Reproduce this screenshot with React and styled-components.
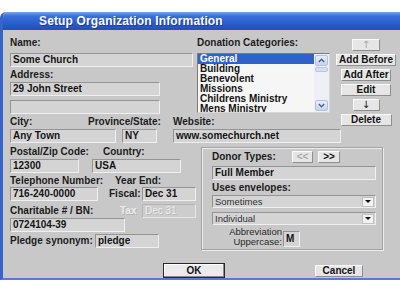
import React from "react";
import styled, { createGlobalStyle, css } from "styled-components";

const GlobalStyle = createGlobalStyle`
  html, body { margin: 0; padding: 0; background: #ffffff; }
  body { font-family: "Liberation Sans", Arial, sans-serif; }
  #root { width: 400px; height: 284px; overflow: hidden; }
  * { box-sizing: border-box; }
`;

const Page = styled.div`
  width: 400px;
  height: 284px;
  padding-top: 12px;
`;

const Window = styled.div`
  width: 400px;
  display: flex;
  flex-direction: column;
  border-left: 3px solid #3563c8;
  border-bottom: 2px solid #5a7cc8;
  border-top-left-radius: 6px;
  overflow: hidden;
`;

const TitleBar = styled.div`
  height: 18px;
  padding-left: 36px;
  background: linear-gradient(to bottom, #79a4ec 0%, #3b70da 22%, #2a5fcf 60%, #1f50bc 100%);
  color: #ffffff;
  font-weight: bold;
  font-size: 12px;
  line-height: 18px;
  letter-spacing: 0.15px;
  text-shadow: 1px 1px 0 #17398a;
  white-space: nowrap;
`;

const Body = styled.div`
  height: 248px;
  background: #c8c8c8;
  padding: 7px 0 0 7px;
  display: flex;
  flex-direction: column;
  overflow: hidden;
`;

const Row = styled.div`
  display: flex;
  align-items: ${(p) => p.$align || "flex-start"};
  margin-top: ${(p) => p.$mt || 0}px;
`;

const Column = styled.div`
  display: flex;
  flex-direction: column;
  width: ${(p) => (p.$w ? `${p.$w}px` : "auto")};
  margin-left: ${(p) => p.$ml || 0}px;
  margin-top: ${(p) => p.$mt || 0}px;
  padding-top: ${(p) => p.$pt || 0}px;
  flex-shrink: 0;
`;

const Label = styled.div`
  font-weight: bold;
  font-size: 10px;
  line-height: 12px;
  color: ${(p) => (p.$disabled ? "#ececec" : "#1c1c1c")};
  text-shadow: ${(p) => (p.$disabled ? "1px 1px 0 #b4b4b4" : "none")};
  white-space: nowrap;
  width: ${(p) => (p.$w ? `${p.$w}px` : "auto")};
  margin-top: ${(p) => p.$mt || 0}px;
  flex-shrink: 0;
`;

const TextBox = styled.div`
  width: ${(p) => p.$w}px;
  height: ${(p) => p.$h || 14}px;
  margin-top: ${(p) => p.$mt || 0}px;
  margin-left: ${(p) => p.$ml || 0}px;
  border: 1px solid;
  border-color: #949494 #efefef #efefef #949494;
  background: #d4d4d4;
  font-weight: bold;
  font-size: 10px;
  line-height: ${(p) => (p.$h || 14) - 2}px;
  padding-left: 2px;
  color: #141414;
  white-space: nowrap;
  overflow: hidden;
  flex-shrink: 0;
  ${(p) =>
    p.$disabled &&
    css`
      border-color: #b4b4b4 #e6e6e6 #e6e6e6 #b4b4b4;
      background: #cdcdcd;
      color: #ededed;
      text-shadow: 1px 1px 0 #b8b8b8;
      font-weight: normal;
    `}
`;

const ListBox = styled.div`
  width: 133px;
  height: 60px;
  margin-top: 4px;
  display: flex;
  border: 1px solid;
  border-color: #7c7c7c #d8d8d8 #d8d8d8 #7c7c7c;
  background: #f6f6f6;
  overflow: hidden;
`;

const ListItems = styled.div`
  flex: 1;
  display: flex;
  flex-direction: column;
`;

const ListItem = styled.div`
  height: 10px;
  line-height: 10px;
  font-weight: bold;
  font-size: 10px;
  padding-left: 2px;
  white-space: nowrap;
  flex-shrink: 0;
  color: ${(p) => (p.$selected ? "#ffffff" : "#141414")};
  background: ${(p) => (p.$selected ? "#2f62c9" : "transparent")};
`;

const ScrollBar = styled.div`
  width: 15px;
  display: flex;
  flex-direction: column;
  background: #eef0f5;
  padding: 1px 1px 1px 1px;
`;

const ScrollBtn = styled.div`
  height: 11px;
  border: 1px solid #b3c2e2;
  border-radius: 2px;
  background: linear-gradient(to bottom, #e6eefc, #c5d4f0);
  display: flex;
  align-items: center;
  justify-content: center;
`;

const Thumb = styled.div`
  height: 5px;
  margin-top: 1px;
  border: 1px solid #b8c6e6;
  border-radius: 2px;
  background: #d4def4;
`;

const Track = styled.div`
  flex: 1;
`;

const Btn = styled.button`
  width: ${(p) => p.$w}px;
  height: ${(p) => p.$h || 12}px;
  margin: 0;
  padding: 0;
  border: 1px solid;
  border-color: #fbfbfb #8e8e8e #8e8e8e #fbfbfb;
  background: #e6e6e6;
  font-family: "Liberation Sans", Arial, sans-serif;
  font-weight: bold;
  font-size: 10px;
  line-height: 10px;
  color: #141414;
  white-space: nowrap;
  flex-shrink: 0;
  margin-left: ${(p) => p.$ml || 0}px;
  &:disabled {
    color: #a9a9a9;
  }
`;

const ArrowBtn = styled(Btn)`
  font-family: "DejaVu Sans", sans-serif;
  font-weight: normal;
  font-size: 10px;
`;

const DefaultBtn = styled(Btn)`
  border: 1px solid #2a2a2a;
  box-shadow: inset -1px -1px 0 #8a8a8a, inset 1px 1px 0 #ffffff;
  background: #ebebeb;
`;

const ButtonColumn = styled.div`
  width: 60px;
  display: flex;
  flex-direction: column;
  align-items: center;
  gap: 3px;
  padding-top: 2px;
  flex-shrink: 0;
`;

const GroupBox = styled.div`
  width: 182px;
  height: 103px;
  margin-top: 1px;
  border: 1px solid #a2a2a2;
  box-shadow: inset 1px 1px 0 #ececec, 1px 1px 0 #ececec;
  padding: 3px 0 0 10px;
  display: flex;
  flex-direction: column;
  flex-shrink: 0;
`;

const Select = styled.div`
  width: 164px;
  height: 13px;
  margin-top: ${(p) => p.$mt || 0}px;
  border: 1px solid;
  border-color: #949494 #efefef #efefef #949494;
  background: #d4d4d4;
  display: flex;
  align-items: center;
  justify-content: space-between;
  font-size: 9.5px;
  line-height: 11px;
  color: #333333;
  padding-left: 2px;
  padding-right: 1px;
`;

const DropBtn = styled.div`
  width: 12px;
  height: 10px;
  background: #f2f2f2;
  border: 1px solid #c0c0c0;
  display: flex;
  align-items: center;
  justify-content: center;
`;

const Caret = styled.div`
  width: 0;
  height: 0;
  border-left: 3px solid transparent;
  border-right: 3px solid transparent;
  border-top: 3px solid #111;
`;

const AbbrevText = styled.div`
  width: 70px;
  margin-right: 1px;
  text-align: right;
  font-size: 9.5px;
  line-height: 9.5px;
  color: #2a2a2a;
  padding-bottom: 1px;
`;

const Footer = styled.div`
  display: flex;
  align-items: center;
  margin-top: 13px;
  padding-left: 153px;
`;

const Chevron = ({ down }) => (
  <svg width="7" height="5" viewBox="0 0 7 5">
    <path
      d={down ? "M0.8 1 L3.5 3.7 L6.2 1" : "M0.8 4 L3.5 1.3 L6.2 4"}
      fill="none"
      stroke="#4d6185"
      strokeWidth="1.4"
    />
  </svg>
);

const categories = [
  "General",
  "Building",
  "Benevolent",
  "Missions",
  "Childrens Ministry",
  "Mens Ministry",
];

export default function App() {
  return (
    <>
      <GlobalStyle />
      <Page>
        <Window>
          <TitleBar>Setup Organization Information</TitleBar>
          <Body>
            <Row>
              <Column $w={326}>
                <Row>
                  <Column $w={187}>
                    <Label>Name:</Label>
                    <TextBox $w={183} $mt={4}>Some Church</TextBox>
                    <Label $mt={2}>Address:</Label>
                    <TextBox $w={150} $mt={1}>29 John Street</TextBox>
                    <TextBox $w={150} $mt={4} />
                  </Column>
                  <Column>
                    <Label>Donation Categories:</Label>
                    <ListBox>
                      <ListItems>
                        {categories.map((c, i) => (
                          <ListItem key={c} $selected={i === 0}>
                            {c}
                          </ListItem>
                        ))}
                      </ListItems>
                      <ScrollBar>
                        <ScrollBtn>
                          <Chevron />
                        </ScrollBtn>
                        <Thumb />
                        <Track />
                        <ScrollBtn>
                          <Chevron down />
                        </ScrollBtn>
                      </ScrollBar>
                    </ListBox>
                  </Column>
                </Row>
                <Row $mt={2}>
                  <Label $w={78}>City:</Label>
                  <Label $w={85}>Province/State:</Label>
                  <Label>Website:</Label>
                </Row>
                <Row $mt={1}>
                  <TextBox $w={106}>Any Town</TextBox>
                  <TextBox $w={35} $ml={6}>
                    NY
                  </TextBox>
                  <TextBox $w={168} $ml={16}>
                    www.somechurch.net
                  </TextBox>
                </Row>
              </Column>
              <ButtonColumn>
                <ArrowBtn $w={28} disabled>
                  ↑
                </ArrowBtn>
                <Btn $w={60}>Add Before</Btn>
                <Btn $w={50}>Add After</Btn>
                <Btn $w={50}>Edit</Btn>
                <ArrowBtn $w={27}>↓</ArrowBtn>
                <Btn $w={51}>Delete</Btn>
              </ButtonColumn>
            </Row>

            <Row $mt={3}>
              <Column $w={191}>
                <Row>
                  <Label $w={93}>Postal/Zip Code:</Label>
                  <Label>Country:</Label>
                </Row>
                <Row $mt={1}>
                  <TextBox $w={69}>12300</TextBox>
                  <TextBox $w={89} $ml={13}>
                    USA
                  </TextBox>
                </Row>
                <Row $mt={2}>
                  <Label $w={105}>Telephone Number:</Label>
                  <Label>Year End:</Label>
                </Row>
                <Row $align="center">
                  <TextBox $w={88}>716-240-0000</TextBox>
                  <Label $w={33} style={{ marginLeft: 11 }}>
                    Fiscal:
                  </Label>
                  <TextBox $w={54}>Dec 31</TextBox>
                </Row>
                <Row $mt={3} $align="center">
                  <Label $w={110}>Charitable # / BN:</Label>
                  <Label $w={22} $disabled>
                    Tax
                  </Label>
                  <TextBox $w={54} $disabled>
                    Dec 31
                  </TextBox>
                </Row>
                <TextBox $w={115}>0724104-39</TextBox>
                <Row $mt={2} $align="center">
                  <Label $w={85}>Pledge synonym:</Label>
                  <TextBox $w={64}>pledge</TextBox>
                </Row>
              </Column>
              <GroupBox>
                <Row $align="center">
                  <Label $w={80}>Donor Types:</Label>
                  <Btn $w={21} $h={12} disabled>
                    &lt;&lt;
                  </Btn>
                  <Btn $w={22} $h={12} $ml={5}>
                    &gt;&gt;
                  </Btn>
                </Row>
                <TextBox $w={164} $mt={3}>
                  Full Member
                </TextBox>
                <Label $mt={2}>Uses envelopes:</Label>
                <Select $mt={1}>
                  <span>Sometimes</span>
                  <DropBtn>
                    <Caret />
                  </DropBtn>
                </Select>
                <Select $mt={4}>
                  <span>Individual</span>
                  <DropBtn>
                    <Caret />
                  </DropBtn>
                </Select>
                <Row $mt={2} $align="flex-end">
                  <AbbrevText>
                    Abbreviation
                    <br />
                    Uppercase:
                  </AbbrevText>
                  <TextBox $w={17} $h={16}>
                    M
                  </TextBox>
                </Row>
              </GroupBox>
            </Row>

            <Footer>
              <DefaultBtn $w={62} $h={15}>
                OK
              </DefaultBtn>
              <Btn $w={48} $h={12} $ml={90}>
                Cancel
              </Btn>
            </Footer>
          </Body>
        </Window>
      </Page>
    </>
  );
}
